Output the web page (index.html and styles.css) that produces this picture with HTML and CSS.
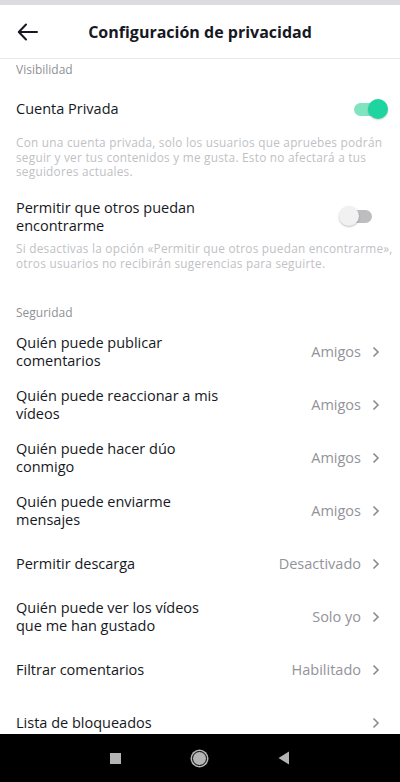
FILE: index.html
```html
<!DOCTYPE html>
<html lang="es">
<head>
  <meta charset="UTF-8">
  <title>Configuración de privacidad</title>
  <link rel="stylesheet" href="styles.css">
</head>
<body>
  <div class="pantalla">
    <div class="barra-estado"></div>

    <header class="cabecera">
      <svg class="volver" width="22" height="18" viewBox="0 0 22 18">
        <path d="M20 9H2M9 1.5L1.8 9L9 16.5" fill="none" stroke="#161823" stroke-width="2" stroke-linecap="round" stroke-linejoin="round"/>
      </svg>
      <h1>Configuración de privacidad</h1>
    </header>

    <main class="contenido">
      <div class="seccion seccion-primera">Visibilidad</div>

      <div class="fila-switch fila-cuenta">
        <span class="texto">Cuenta Privada</span>
        <span class="switch activo"><span class="bolita"></span></span>
      </div>
      <p class="ayuda">Con una cuenta privada, solo los usuarios que apruebes podrán seguir y ver tus contenidos y me gusta. Esto no afectará a tus seguidores actuales.</p>

      <div class="fila-switch fila-encontrar">
        <span class="texto">Permitir que otros puedan<br>encontrarme</span>
        <span class="switch"><span class="bolita"></span></span>
      </div>
      <p class="ayuda ayuda-2">Si desactivas la opción «Permitir que otros puedan encontrarme», otros usuarios no recibirán sugerencias para seguirte.</p>

      <div class="seccion seccion-seguridad">Seguridad</div>

      <div class="lista">
        <div class="fila">
          <span class="texto">Quién puede publicar<br>comentarios</span>
          <span class="valor">Amigos</span>
          <svg class="flecha" width="8" height="12" viewBox="0 0 8 12"><path d="M1.5 1.5L6 6L1.5 10.5" fill="none" stroke="#8a8b91" stroke-width="1.6"/></svg>
        </div>
        <div class="fila">
          <span class="texto">Quién puede reaccionar a mis<br>vídeos</span>
          <span class="valor">Amigos</span>
          <svg class="flecha" width="8" height="12" viewBox="0 0 8 12"><path d="M1.5 1.5L6 6L1.5 10.5" fill="none" stroke="#8a8b91" stroke-width="1.6"/></svg>
        </div>
        <div class="fila">
          <span class="texto">Quién puede hacer dúo<br>conmigo</span>
          <span class="valor">Amigos</span>
          <svg class="flecha" width="8" height="12" viewBox="0 0 8 12"><path d="M1.5 1.5L6 6L1.5 10.5" fill="none" stroke="#8a8b91" stroke-width="1.6"/></svg>
        </div>
        <div class="fila">
          <span class="texto">Quién puede enviarme<br>mensajes</span>
          <span class="valor">Amigos</span>
          <svg class="flecha" width="8" height="12" viewBox="0 0 8 12"><path d="M1.5 1.5L6 6L1.5 10.5" fill="none" stroke="#8a8b91" stroke-width="1.6"/></svg>
        </div>
        <div class="fila">
          <span class="texto">Permitir descarga</span>
          <span class="valor">Desactivado</span>
          <svg class="flecha" width="8" height="12" viewBox="0 0 8 12"><path d="M1.5 1.5L6 6L1.5 10.5" fill="none" stroke="#8a8b91" stroke-width="1.6"/></svg>
        </div>
        <div class="fila">
          <span class="texto">Quién puede ver los vídeos<br>que me han gustado</span>
          <span class="valor">Solo yo</span>
          <svg class="flecha" width="8" height="12" viewBox="0 0 8 12"><path d="M1.5 1.5L6 6L1.5 10.5" fill="none" stroke="#8a8b91" stroke-width="1.6"/></svg>
        </div>
        <div class="fila">
          <span class="texto">Filtrar comentarios</span>
          <span class="valor">Habilitado</span>
          <svg class="flecha" width="8" height="12" viewBox="0 0 8 12"><path d="M1.5 1.5L6 6L1.5 10.5" fill="none" stroke="#8a8b91" stroke-width="1.6"/></svg>
        </div>
        <div class="fila">
          <span class="texto">Lista de bloqueados</span>
          <span class="valor"></span>
          <svg class="flecha" width="8" height="12" viewBox="0 0 8 12"><path d="M1.5 1.5L6 6L1.5 10.5" fill="none" stroke="#8a8b91" stroke-width="1.6"/></svg>
        </div>
      </div>
    </main>

    <nav class="navegacion">
      <span class="nav-cuadro"></span>
      <span class="nav-circulo"></span>
      <svg class="nav-atras" width="12" height="14" viewBox="0 0 12 14"><path d="M11 0.5V13.5L0.5 7Z" fill="#b4b4b4"/></svg>
    </nav>
  </div>
</body>
</html>
```

FILE: styles.css
```css
body {
  margin: 0;
  font-family: "Open Sans", Arial, sans-serif;
  background: #fff;
  color: #161823;
}

.pantalla {
  height: 782px;
  display: flex;
  flex-direction: column;
  overflow: hidden;
}

.barra-estado {
  height: 5px;
  background: #dcdcdf;
  flex-shrink: 0;
}

.cabecera {
  height: 53px;
  flex-shrink: 0;
  display: flex;
  align-items: center;
  justify-content: center;
  border-bottom: 1px solid #e8e8e8;
  position: relative;
}

.volver {
  position: absolute;
  left: 17px;
  top: 18px;
}

.cabecera h1 {
  margin: 0;
  font-size: 16px;
  font-weight: bold;
  color: #161823;
}

.contenido {
  flex: 1;
  overflow: hidden;
}

.seccion {
  padding: 0 16px;
  font-size: 12px;
  line-height: 16px;
  color: #8f9095;
}

.seccion-primera {
  padding-top: 3px;
}

.seccion-seguridad {
  padding-top: 33px;
}

.fila-switch {
  display: flex;
  align-items: center;
  justify-content: space-between;
  padding: 0 20px 0 16px;
  font-size: 14.5px;
  line-height: 18px;
}

.fila-cuenta {
  height: 44px;
  margin-top: 9px;
}

.fila-encontrar {
  padding-top: 20px;
  padding-right: 28px;
}

.ayuda {
  margin: 4px 0 0;
  padding: 0 6px 0 16px;
  font-size: 11.8px;
  letter-spacing: 0.25px;
  line-height: 14.5px;
  color: #c0c1c4;
}

.ayuda-2 {
  margin-top: 6px;
  line-height: 15.5px;
}

.switch {
  width: 26px;
  height: 13px;
  border-radius: 7px;
  background: #bdbdc0;
  position: relative;
  display: inline-block;
}

.switch .bolita {
  position: absolute;
  left: -7px;
  top: -4px;
  width: 20px;
  height: 20px;
  border-radius: 50%;
  background: #f1f1f2;
  box-shadow: 0 1px 2px rgba(0, 0, 0, 0.25);
}

.switch.activo {
  background: #7fe4bf;
}

.switch.activo .bolita {
  left: 14px;
  background: #1ed49f;
  box-shadow: 0 1px 2px rgba(0, 0, 0, 0.2);
}

.lista {
  margin-top: 5px;
}

.fila {
  height: 53px;
  display: flex;
  align-items: center;
  padding: 0 20px 0 16px;
  font-size: 14.5px;
  line-height: 18px;
}

.fila .texto {
  flex: 1;
}

.valor {
  color: #929399;
  margin-right: 11px;
}

.flecha {
  display: block;
}

.navegacion {
  height: 48px;
  flex-shrink: 0;
  background: #000;
  display: flex;
  align-items: center;
  justify-content: center;
  gap: 71px;
}

.nav-cuadro {
  width: 11px;
  height: 11px;
  background: #b4b4b4;
}

.nav-circulo {
  width: 13px;
  height: 13px;
  border-radius: 50%;
  background: #b4b4b4;
  border: 1.5px solid #000;
  box-shadow: 0 0 0 1.5px #b4b4b4;
}
```
